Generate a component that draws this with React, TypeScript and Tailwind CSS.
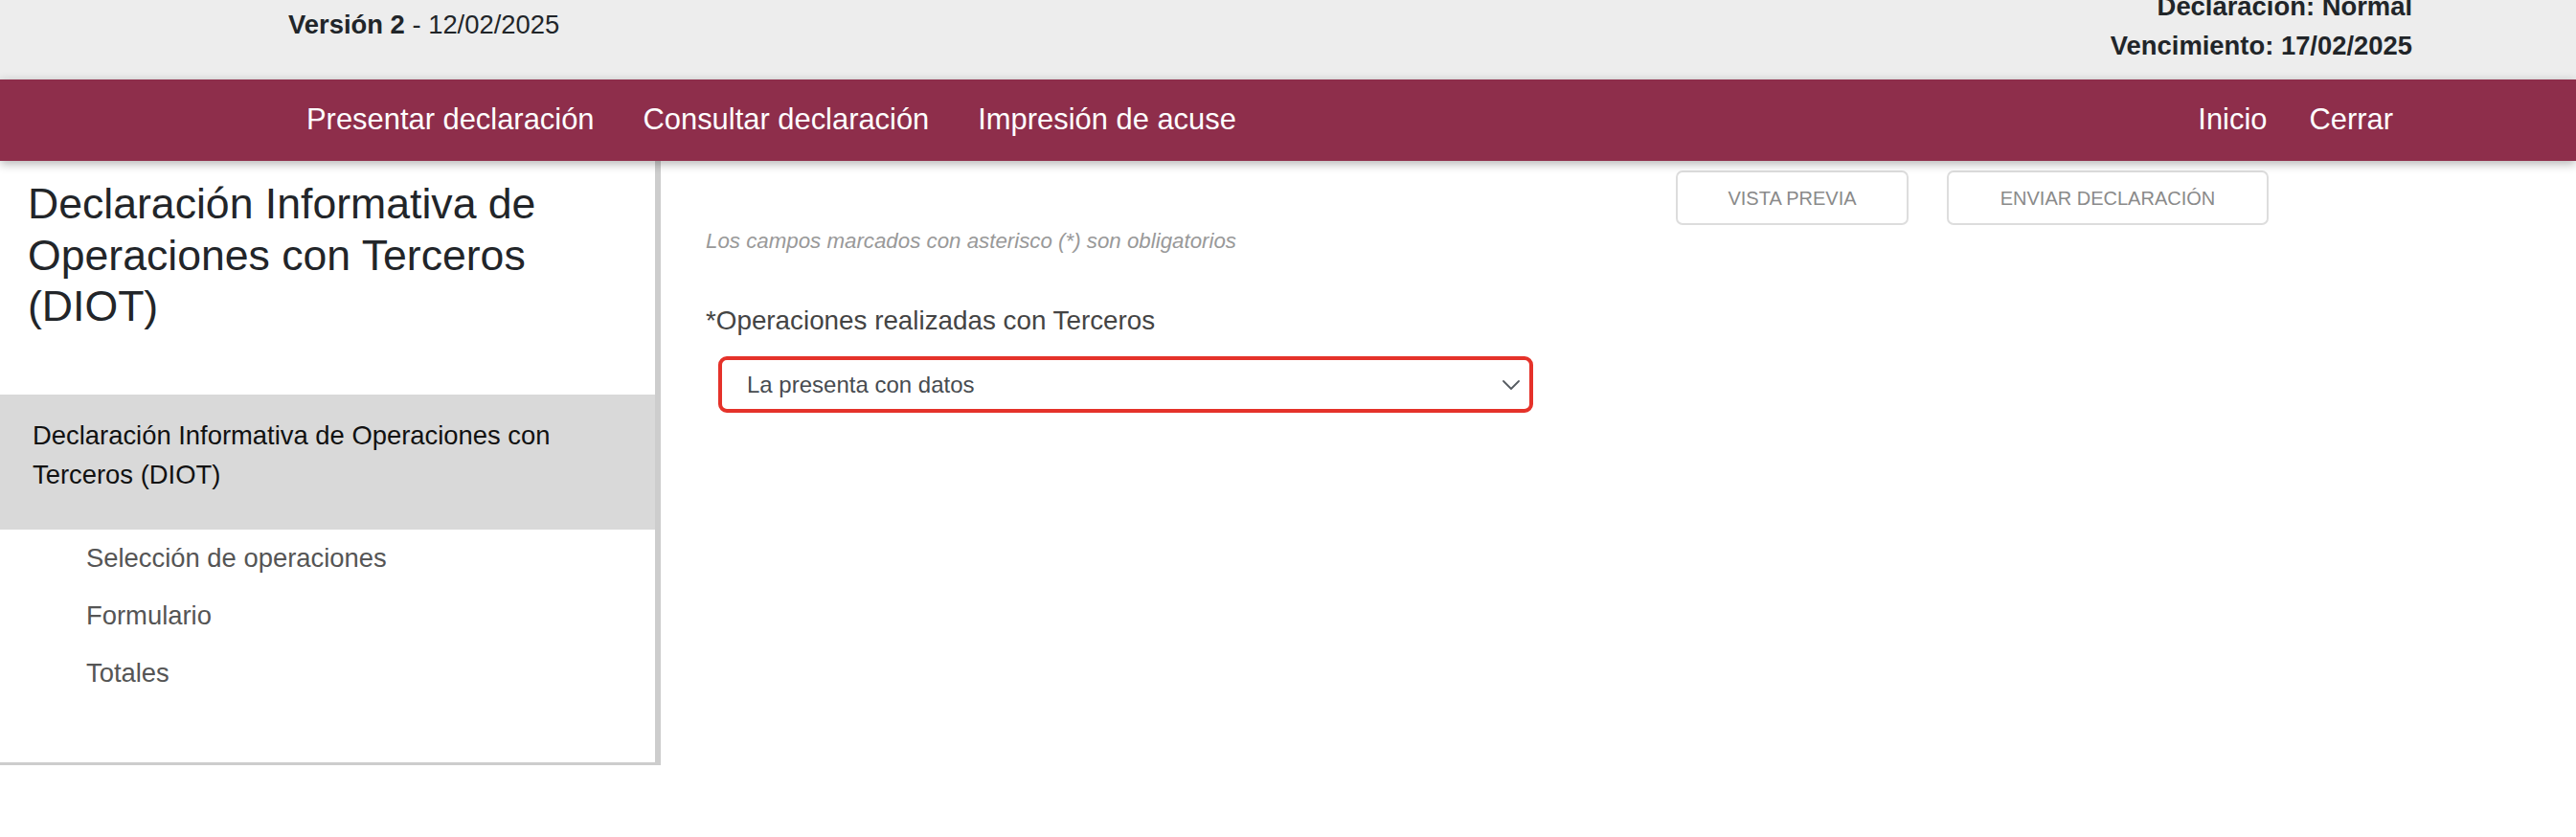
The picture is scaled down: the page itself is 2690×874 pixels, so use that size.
import React from "react";

const font = { fontFamily: '"Liberation Sans", Arial, Helvetica, sans-serif' };

function Chevron() {
  return (
    <svg width="18" height="10" viewBox="0 0 18 10" fill="none" className="shrink-0">
      <path d="M1 1 L9 9 L17 1" stroke="#555b61" strokeWidth="1.8" strokeLinecap="round" strokeLinejoin="round" />
    </svg>
  );
}

export default function App() {
  return (
    <div className="w-[2690px] min-h-[874px] bg-white overflow-hidden" style={font}>
      {/* Top header */}
      <div className="h-[83px] bg-[#ededed] overflow-hidden flex items-start justify-between pl-[301px] pr-[171px]">
        <div className="mt-[5px] text-[27.4px] leading-[41px] text-[#212529]">
          <span className="font-bold">Versión 2</span> - 12/02/2025
        </div>
        <div className="-mt-[14px] flex flex-col items-end text-[27.4px] leading-[41px] font-bold text-[#212529]">
          <span>Declaración: Normal</span>
          <span>Vencimiento: 17/02/2025</span>
        </div>
      </div>

      {/* Navbar */}
      <div className="relative z-10 h-[85px] bg-[#8e2e4b] shadow-[0_3px_10px_rgba(0,0,0,0.3)] flex items-center justify-between pl-[320px] pr-[191px] text-white text-[30.9px]">
        <div className="flex items-center gap-[51px]">
          <span>Presentar declaración</span>
          <span>Consultar declaración</span>
          <span>Impresión de acuse</span>
        </div>
        <div className="flex items-center gap-[44px]">
          <span>Inicio</span>
          <span>Cerrar</span>
        </div>
      </div>

      {/* Body */}
      <div className="flex items-start">
        {/* Sidebar */}
        <aside className="w-[690px] shrink-0 border-r-[6px] border-b-[3px] border-[#cdcdcd] bg-white">
          <h1 className="pt-[18px] pl-[29px] pr-[29px] text-[44.6px] leading-[53.5px] font-normal text-[#222529]">
            Declaración Informativa de Operaciones con Terceros (DIOT)
          </h1>
          <div className="mt-[65px] bg-[#d9d9d9] pl-[34px] pr-[20px] pt-[22px] pb-[37px] text-[27.4px] leading-[41px] text-[#111]">
            Declaración Informativa de Operaciones con Terceros (DIOT)
          </div>
          <ul className="pl-[90px] pb-[63px] text-[27.4px] text-[#555]">
            <li className="h-[60px] flex items-center">Selección de operaciones</li>
            <li className="h-[60px] flex items-center">Formulario</li>
            <li className="h-[60px] flex items-center">Totales</li>
          </ul>
        </aside>

        {/* Main */}
        <main className="flex-1 pl-[47px]">
          <div className="flex justify-end gap-[40px] pr-[321px] pt-[10px]">
            <button className="h-[57px] w-[243px] rounded-[7px] border-2 border-[#dddddd] bg-white text-[20px] text-[#8a8a8a] uppercase">
              VISTA PREVIA
            </button>
            <button className="h-[57px] w-[336px] rounded-[7px] border-2 border-[#dddddd] bg-white text-[20px] text-[#8a8a8a] uppercase">
              ENVIAR DECLARACIÓN
            </button>
          </div>
          <p className="text-[22.3px] leading-[34px] italic text-[#999999]">
            Los campos marcados con asterisco (*) son obligatorios
          </p>
          <div className="mt-[45px] text-[27.8px] leading-[41px] text-[#444444]">
            *Operaciones realizadas con Terceros
          </div>
          <div className="mt-[17px] ml-[13px] w-[851px] h-[59px] rounded-[9px] border-[4px] border-[#e5322a] flex items-center justify-between pl-[26px] pr-[10px]">
            <span className="text-[24px] text-[#474b50]">La presenta con datos</span>
            <Chevron />
          </div>
        </main>
      </div>
    </div>
  );
}
